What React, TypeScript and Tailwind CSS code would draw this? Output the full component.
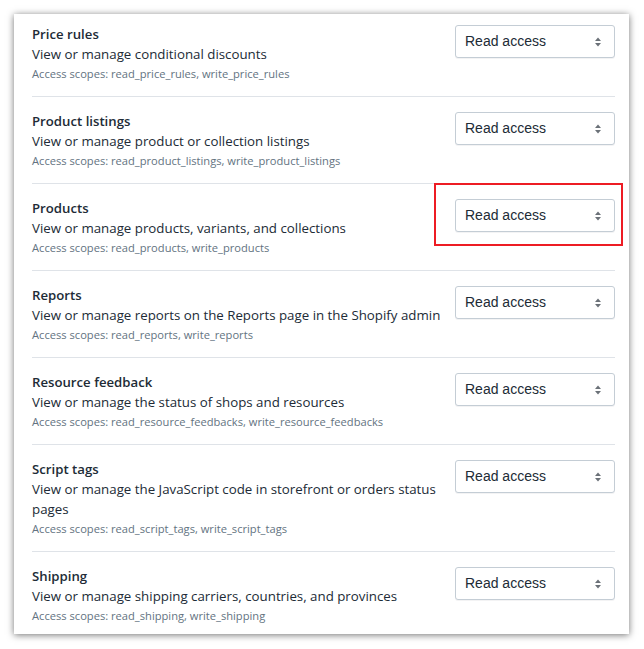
import React from "react";

type Scope = {
  title: string;
  text: string;
  scopes: string;
  highlighted?: boolean;
};

const scopes: Scope[] = [
  {
    title: "Price rules",
    text: "View or manage conditional discounts",
    scopes: "read_price_rules, write_price_rules",
  },
  {
    title: "Product listings",
    text: "View or manage product or collection listings",
    scopes: "read_product_listings, write_product_listings",
  },
  {
    title: "Products",
    text: "View or manage products, variants, and collections",
    scopes: "read_products, write_products",
    highlighted: true,
  },
  {
    title: "Reports",
    text: "View or manage reports on the Reports page in the Shopify admin",
    scopes: "read_reports, write_reports",
  },
  {
    title: "Resource feedback",
    text: "View or manage the status of shops and resources",
    scopes: "read_resource_feedbacks, write_resource_feedbacks",
  },
  {
    title: "Script tags",
    text: "View or manage the JavaScript code in storefront or orders status pages",
    scopes: "read_script_tags, write_script_tags",
  },
  {
    title: "Shipping",
    text: "View or manage shipping carriers, countries, and provinces",
    scopes: "read_shipping, write_shipping",
  },
];

function SelectArrows() {
  return (
    <svg width="8" height="12" viewBox="0 0 8 12" aria-hidden>
      <path d="M4 1.5 L7 5 H1 Z" fill="#6b7178" />
      <path d="M4 10.5 L7 7 H1 Z" fill="#6b7178" />
    </svg>
  );
}

function AccessSelect() {
  return (
    <div className="flex h-[33px] w-[160px] shrink-0 items-center justify-between rounded-[3px] border border-[#c4cdd5] bg-white pl-[9px] pr-[12px] font-['Liberation_Sans',Arial,sans-serif] text-[14px] text-[#212b36] shadow-[0_1px_0_rgba(22,29,37,0.05)]">
      <span>Read access</span>
      <SelectArrows />
    </div>
  );
}

export default function App() {
  return (
    <div className="min-h-screen bg-white pt-[14px]">
      <div className="ml-[14px] w-[615px] h-[620px] overflow-hidden bg-white pl-[18px] pr-[14px] shadow-[0_1px_7px_rgba(0,0,0,0.55)] font-['Open_Sans','Noto_Sans',sans-serif] text-[#212b36]">
        {scopes.map((s, i) => (
          <div
            key={s.title}
            className={
              "relative flex gap-3 pb-[12px] " +
              (i === 0 ? "pt-[10px]" : "border-t border-[#dfe3e8] pt-[14px]")
            }
          >
            <div className="min-w-0 flex-1">
              <div className="text-[13.2px] font-semibold leading-[20px]">{s.title}</div>
              <div className="text-[13.3px] leading-[20px]">{s.text}</div>
              <div className="text-[11.15px] leading-[20px] text-[#637381]">
                Access scopes: {s.scopes}
              </div>
            </div>
            <div className="relative mt-[1px]">
              <AccessSelect />
              {s.highlighted && (
                <div className="pointer-events-none absolute -left-[21px] -top-[16px] h-[63px] w-[189px] border-2 border-[#ed1c24]" />
              )}
            </div>
          </div>
        ))}
      </div>
    </div>
  );
}
